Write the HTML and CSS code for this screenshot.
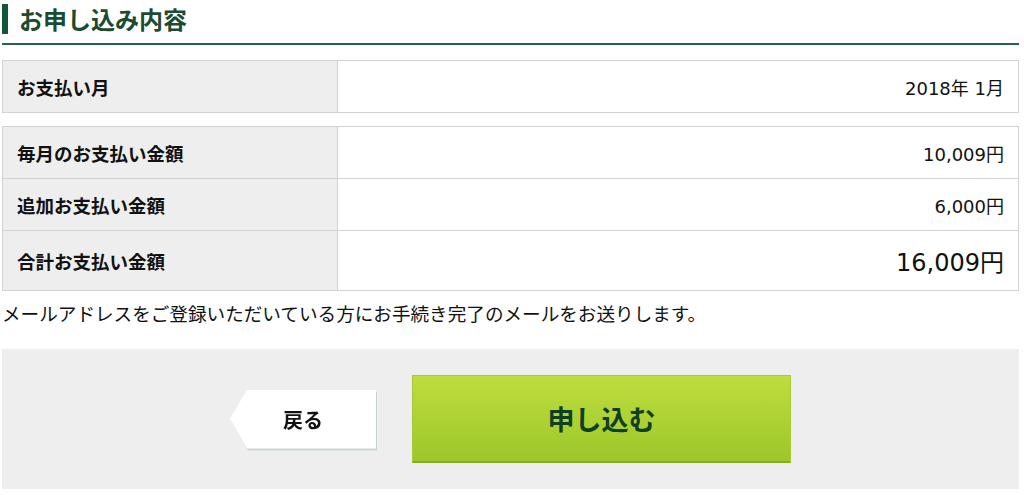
FILE: index.html
```html
<!DOCTYPE html>
<html lang="ja">

<head>
  <meta charset="UTF-8">
  <meta name="viewport" content="width=device-width, initial-scale=1.0">
  <title>お申し込み内容</title>
  <link rel="stylesheet" href="styles.css">
</head>

<body>
  <div class="page">
    <div class="section-title">
      <h2>お申し込み内容</h2>
    </div>

    <table class="detail">
      <tr>
        <th>お支払い月</th>
        <td>2018年 1月</td>
      </tr>
    </table>

    <table class="detail">
      <tr>
        <th>毎月のお支払い金額</th>
        <td>10,009円</td>
      </tr>
      <tr>
        <th>追加お支払い金額</th>
        <td>6,000円</td>
      </tr>
      <tr class="total">
        <th>合計お支払い金額</th>
        <td>16,009円</td>
      </tr>
    </table>

    <p class="note">メールアドレスをご登録いただいている方にお手続き完了のメールをお送りします。</p>

    <div class="actions">
      <div class="back">
        <button class="back-btn" type="button">戻る</button>
      </div>
      <button class="submit-btn" type="button">申し込む</button>
    </div>
  </div>
</body>

</html>
```

FILE: styles.css
```css
:root {
  --green-dark: #1b4b30;
  --green-bar: #10573a;
  --border-color: #d2d2d2;
  --bg-color: #eeeeee;
}

body {
  margin: 0;
  font-family: "DejaVu Sans", "Noto Sans CJK JP", sans-serif;
  color: #111;
}

.page {
  margin: 0 5px 0 2px;
}

.section-title {
  padding: 4px 0 9px;
  border-bottom: 2px solid #2a6448;
}

.section-title h2 {
  margin: 0;
  border-left: 6px solid var(--green-bar);
  padding-left: 11px;
  font-family: "Noto Sans CJK JP", sans-serif;
  font-size: 24px;
  line-height: 30px;
  font-weight: 700;
  color: var(--green-dark);
}

.detail {
  width: 100%;
  border-collapse: collapse;
  margin-top: 15px;
}

.detail + .detail {
  margin-top: 13px;
}

.detail th,
.detail td {
  border: 1px solid var(--border-color);
  height: 52px;
  padding: 0 14px;
  box-sizing: border-box;
}

.detail th {
  width: 335px;
  background-color: var(--bg-color);
  text-align: left;
  font-family: "Noto Sans CJK JP", sans-serif;
  font-size: 18.5px;
  font-weight: 700;
}

.detail td {
  text-align: right;
  font-size: 18px;
}

.detail .total th,
.detail .total td {
  height: 60px;
}

.detail .total td {
  font-size: 24px;
}

.note {
  margin: 8px 0 23px;
  font-family: "Noto Sans CJK JP", sans-serif;
  font-size: 18.6px;
  line-height: 27px;
}

.actions {
  display: flex;
  justify-content: center;
  align-items: center;
  gap: 36px;
  height: 140px;
  background-color: var(--bg-color);
}

.back {
  filter: drop-shadow(1px 2px 0 #c6d4cf);
}

.back-btn {
  display: block;
  width: 146px;
  height: 59px;
  padding: 0;
  border: none;
  background: #fff;
  clip-path: polygon(17px 0, 100% 0, 100% 100%, 17px 100%, 0 50%);
  font-family: "Noto Sans CJK JP", sans-serif;
  font-size: 20px;
  font-weight: 700;
  color: #111;
  cursor: pointer;
}

.submit-btn {
  width: 379px;
  height: 88px;
  border: 1px solid #a6c934;
  border-bottom: 2px solid #86ad22;
  background: linear-gradient(#bfdd3d, #9cc72b);
  font-family: "Noto Sans CJK JP", sans-serif;
  font-size: 27px;
  font-weight: 700;
  color: #0f4024;
  cursor: pointer;
}
```
